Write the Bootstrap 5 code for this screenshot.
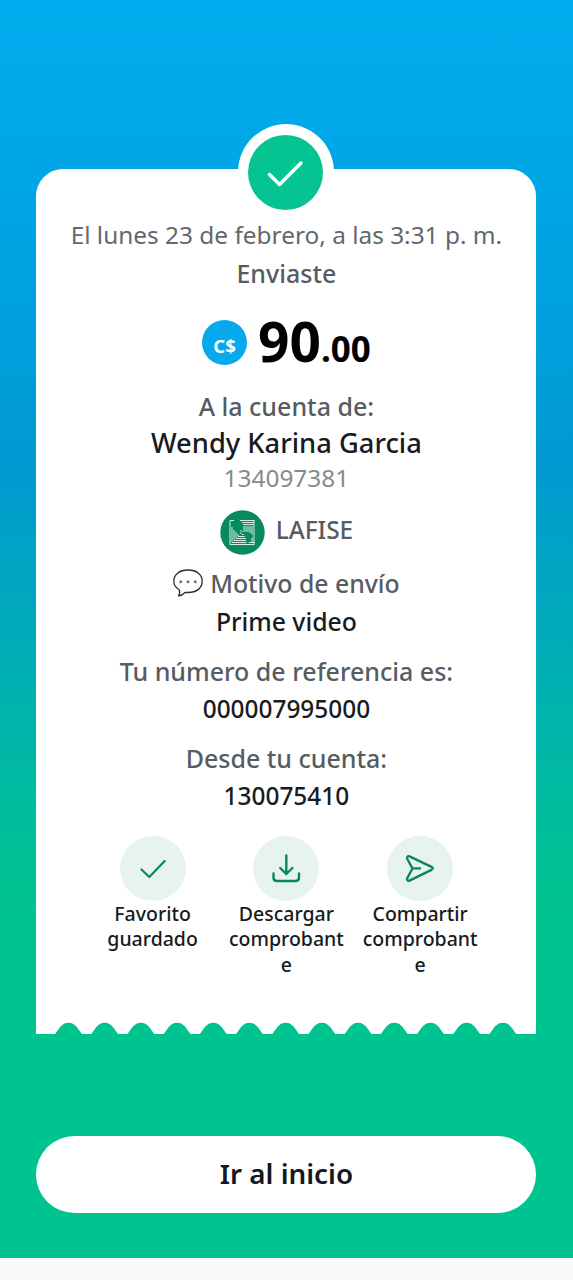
<!DOCTYPE html>
<html lang="es">
<head>
<meta charset="utf-8">
<meta name="viewport" content="width=device-width, initial-scale=1">
<title>Comprobante de envío</title>
<link href="https://cdn.jsdelivr.net/npm/bootstrap@5.3.0/dist/css/bootstrap.min.css" rel="stylesheet">
<style>
  body { font-family: "Noto Sans", "Open Sans", sans-serif; background: #fafafa; color: #181b20; }
  .screen { height: 1258px; padding: 168.5px 36.6px 0 36.4px; background: linear-gradient(180deg, #00acee 0, #00a7e7 150px, #00a1e0 300px, #0099d2 460px, #00b1b1 690px, #00c294 870px, #00c490 920px, #00c490 100%); }
  .receipt { height: 865.5px; padding-top: 47px; border-radius: 27px 27px 0 0; }
  .seal { width: 96px; height: 96px; top: -45px; left: 50%; margin-left: -48.5px; }
  .seal-disc { width: 75px; height: 75px; background: #06c491; margin-top: 2px; }
  .ln { white-space: nowrap; font-size: 24.4px; line-height: 38px; font-weight: 500; }
  .muted { color: #565c61; font-size: 25px; }
  .ln.date { font-weight: 400; color: #63686d; }
  .person { font-size: 27.3px; line-height: 37.5px; margin-top: -.5px; }
  .ln.acct { font-weight: 400; color: #868b8f; line-height: 32px; }
  .total { margin-top: 18.5px; height: 70px; gap: 11px; }
  .coin { width: 45px; height: 45px; margin-top: -5px; padding-top: 7px; background: #06a9ec; color: #fff; font-size: 18.5px; font-weight: 700; }
  .amount { font-size: 55px; font-weight: 700; color: #000; line-height: 70px; }
  .cents { font-size: 35px; }
  .lead-in { margin-top: 6.5px; }
  .bank { margin-top: 16.5px; gap: 11px; height: 45px; }
  .bank .muted { font-size: 24.4px; padding-bottom: 6px; }
  .reason { margin-top: 8.5px; gap: 7px; }
  .concept { font-size: 24.8px; margin-top: .5px; }
  .sect { margin-top: 11.5px; }
  .actions { margin-top: 20.8px; }
  .action { width: 133.8px; font-size: 19.5px; font-weight: 500; line-height: 25.6px; }
  .action-disc { width: 66px; height: 65px; background: #e6f3f1; }
  .action-label { width: 119px; word-break: break-word; }
  .home { height: 77.5px; margin-top: 101.5px; border-radius: 39px; border: 0; padding-bottom: 9px; background: #fff; font-size: 27.8px; line-height: 1.3; font-weight: 600; color: #15181e; }
</style>
</head>
<body>
<main class="screen">
  <section class="receipt bg-white position-relative text-center d-flex flex-column align-items-center">
    <div class="seal position-absolute rounded-circle bg-white d-flex align-items-center justify-content-center">
      <div class="seal-disc rounded-circle">
        <svg class="d-block" width="75" height="75" viewBox="0 0 75 75" fill="none" stroke="#fff" stroke-width="3.5" stroke-linecap="round" stroke-linejoin="round"><path d="M21.500 39.500 31.500 49.500 53 28"/></svg>
      </div>
    </div>
    <div class="ln date">El lunes 23 de febrero, a las 3:31 p. m.</div>
    <div class="ln muted">Enviaste</div>
    <div class="total d-flex align-items-center">
      <span class="coin rounded-circle d-flex align-items-center justify-content-center">C$</span>
      <span class="amount">90<span class="cents">.00</span></span>
    </div>
    <div class="ln muted lead-in">A la cuenta de:</div>
    <div class="ln person">Wendy Karina Garcia</div>
    <div class="ln acct">134097381</div>
    <div class="bank d-flex align-items-center">
      <svg width="45" height="45" viewBox="0 0 45 45" fill="none">
        <circle cx="22.500" cy="22.500" r="22.200" fill="#078a5e"/>
        <g stroke="#d9eee6" stroke-width="1">
          <path d="M10 10.500V34.500H34.500"/>
          <path d="M12 17V32.500H34.500M14 20V30.500H26M16 22V28.500H26M18 24V26.500H26"/>
          <path d="M10 10.500H14M20 10.500H34.500M22 12.500H34M23 14.500H34"/>
          <path d="M34 10.500V34M32 16V25M30 16V23M28 16V22M26 16V22M24 16V22M21 20V24"/>
          <path d="M32 27V32M22 24.500H25"/>
        </g>
        <path d="M11 12 15 11 20 12 22 14 20 17 18 19 20 21 22 23 18 21 15 18 14 14Z" fill="#078a5e"/>
        <path d="M24 23 28 23 33 25.500 31 29 28 33.500 26.500 33 26 28 23.500 25Z" fill="#078a5e"/>
      </svg>
      <span class="ln muted">LAFISE</span>
    </div>
    <div class="reason d-flex align-items-center">
      <svg width="30" height="28" viewBox="0 0 30 28" fill="none" stroke="#2b2e30" stroke-width="1.300" stroke-linejoin="round">
        <path d="M6.200 20.800C2.800 18.800.8 15.700.8 12.300.8 5.700 6.200 1 15 1s14.200 4.700 14.200 11.300S23.800 23.500 15 23.500c-1 0-2-.1-3-.2-1.600 2-3.900 3.300-6.500 3.500 1.300-1.600 1.500-3.800.7-6Z"/>
        <g fill="#777" stroke="none"><circle cx="7.700" cy="12.700" r="1.500"/><circle cx="15" cy="12.700" r="1.500"/><circle cx="22.300" cy="12.700" r="1.500"/></g>
      </svg>
      <span class="ln muted" style="font-size:24.8px">Motivo de envío</span>
    </div>
    <div class="ln concept">Prime video</div>
    <div class="ln muted sect">Tu número de referencia es:</div>
    <div class="ln">000007995000</div>
    <div class="ln muted sect">Desde tu cuenta:</div>
    <div class="ln">130075410</div>
    <div class="actions d-flex justify-content-center">
      <div class="action d-flex flex-column align-items-center">
        <span class="action-disc rounded-circle"><svg class="d-block" width="66" height="65" viewBox="0 0 66 65" fill="none" stroke="#07875f" stroke-width="2.200" stroke-linecap="round" stroke-linejoin="round"><path d="M21.500 33.500 29.300 41 44.700 25"/></svg></span>
        <span class="action-label">Favorito guardado</span>
      </div>
      <div class="action d-flex flex-column align-items-center">
        <span class="action-disc rounded-circle"><svg class="d-block" width="66" height="65" viewBox="0 0 66 65" fill="none" stroke="#07875f" stroke-width="2.400" stroke-linecap="round" stroke-linejoin="round"><path d="M33.300 19.500V38M27.200 32 33.300 38 39.400 32M20.500 37.500V41.500Q20.500 45 24 45H42.500Q46 45 46 41.500V37.500"/></svg></span>
        <span class="action-label">Descargar comprobante</span>
      </div>
      <div class="action d-flex flex-column align-items-center">
        <span class="action-disc rounded-circle"><svg class="d-block" width="66" height="65" viewBox="0 0 66 65" fill="none" stroke="#07875f" stroke-width="2.400" stroke-linecap="round" stroke-linejoin="round"><path d="M22.500 20.300 44.500 30.800Q47 32.300 44.500 33.800L22.500 44.700C20.600 45.400 19.600 43.800 20.200 42.300L25.500 32.500 20.200 22.700C19.600 21.200 20.600 19.600 22.500 20.300ZM25.800 32.400H33"/></svg></span>
        <span class="action-label">Compartir comprobante</span>
      </div>
    </div>
    <svg class="d-block mt-auto" width="500" height="12.500" viewBox="0 0 500 12.500" fill="#00c490">
      <defs><path id="notch" d="M-14 12.500C-10.500 9.500-8 .8 0 .8S10.500 9.500 14 12.500Z"/></defs>
      <use href="#notch" x="32.500"/><use href="#notch" x="68.700"/><use href="#notch" x="104.900"/><use href="#notch" x="141.100"/><use href="#notch" x="177.300"/><use href="#notch" x="213.500"/><use href="#notch" x="249.700"/><use href="#notch" x="285.900"/><use href="#notch" x="322.100"/><use href="#notch" x="358.300"/><use href="#notch" x="394.500"/><use href="#notch" x="430.700"/><use href="#notch" x="466.900"/>
    </svg>
  </section>
  <button class="btn home w-100">Ir al inicio</button>
</main>
<script src="https://cdn.jsdelivr.net/npm/bootstrap@5.3.0/dist/js/bootstrap.bundle.min.js"></script>
</body>
</html>
